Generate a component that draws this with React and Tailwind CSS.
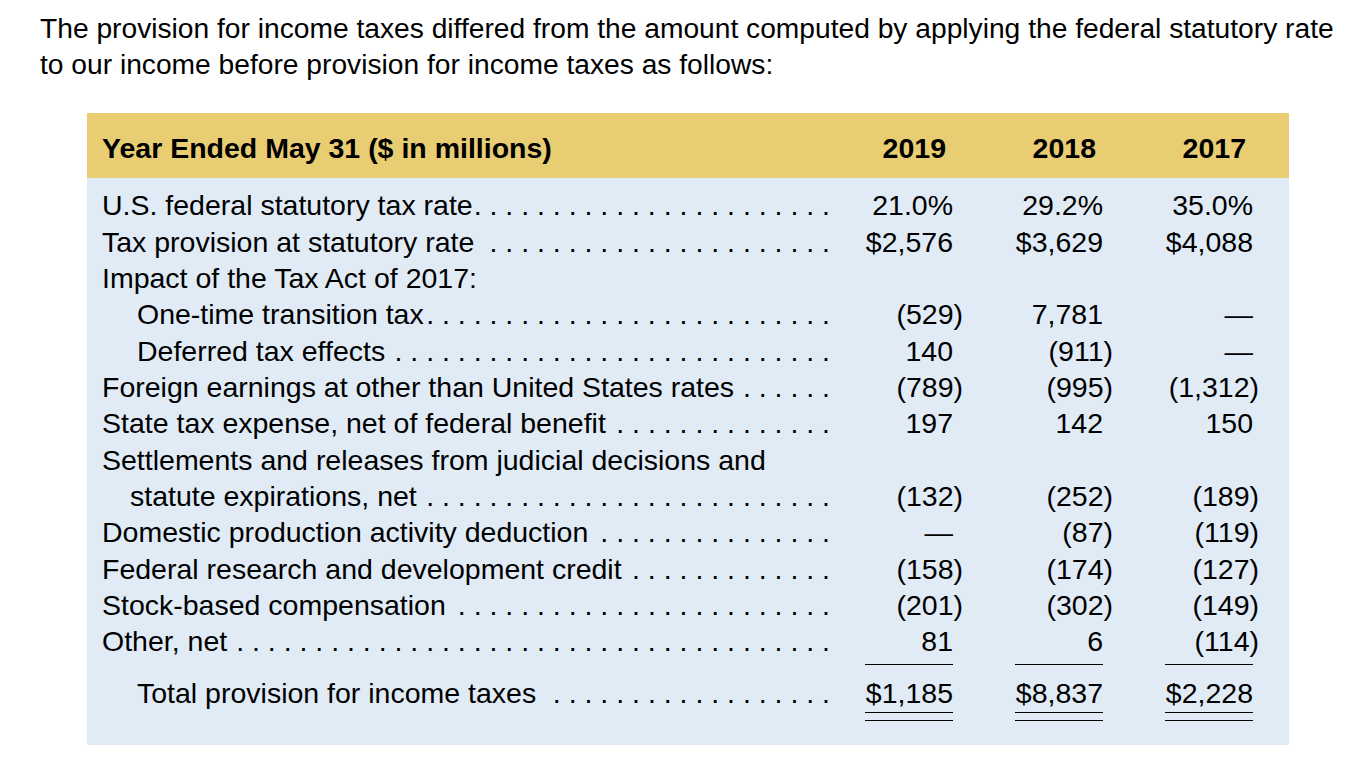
const cols = ["w-[123px]", "w-[150px]", "w-[150px]"];
const hang = ["mr-[-10px]", "mr-[-10px]", "mr-[-6px]"];

const rows = [
  { label: "U.S. federal statutory tax rate", vals: ["21.0%", "29.2%", "35.0%"] },
  { label: "Tax provision at statutory rate", vals: ["$2,576", "$3,629", "$4,088"] },
  { label: "Impact of the Tax Act of 2017:", noLeader: true },
  { label: "One-time transition tax", indent: 35, vals: ["(529)", "7,781", "—"] },
  { label: "Deferred tax effects", indent: 35, vals: ["140", "(911)", "—"] },
  { label: "Foreign earnings at other than United States rates", vals: ["(789)", "(995)", "(1,312)"] },
  { label: "State tax expense, net of federal benefit", vals: ["197", "142", "150"] },
  { label: "Settlements and releases from judicial decisions and", noLeader: true },
  { label: "statute expirations, net", indent: 28, vals: ["(132)", "(252)", "(189)"] },
  { label: "Domestic production activity deduction", vals: ["—", "(87)", "(119)"] },
  { label: "Federal research and development credit", vals: ["(158)", "(174)", "(127)"] },
  { label: "Stock-based compensation", vals: ["(201)", "(302)", "(149)"] },
  { label: "Other, net", vals: ["81", "6", "(114)"], rule: true },
];

const indents = { 0: "", 28: "pl-[28px]", 35: "pl-[35px]" };

// label column is 728px wide; leaders are whole dots on a 15.84px pitch, flush right
const LABEL_W = 728;
const HALF = 7.92;
let ctx;
const dotsFor = (text, indent, trim = 0) => {
  if (!ctx) {
    ctx = document.createElement("canvas").getContext("2d");
    ctx.font = "28.5px 'Liberation Sans'";
  }
  const free = LABEL_W - indent - ctx.measureText(text).width;
  const n = Math.max(0, Math.floor((free / HALF + 1) / 2) - trim);
  return n ? ". ".repeat(n - 1) + "." : "";
};

const Value = ({ v, i }) => {
  if (v.startsWith("(")) {
    return (
      <>
        {v.slice(0, -1)}
        <span className={hang[i]}>)</span>
      </>
    );
  }
  return v;
};

const Label = ({ text, indent = 0, noLeader, trim }) => (
  <div className={`flex flex-1 min-w-0 ${indents[indent]}`}>
    <span className="whitespace-nowrap shrink-0">{text}</span>
    {!noLeader && (
      <span className="flex-1 min-w-0 overflow-hidden whitespace-nowrap text-right">
        {dotsFor(text, indent, trim)}
      </span>
    )}
  </div>
);

export default function App() {
  return (
    <div className="min-h-[764px] bg-white text-black font-['Liberation_Sans',Arial,Helvetica,sans-serif]">
      <p className="pl-[40px] pt-[10px] w-[1340px] text-[28.2px] leading-[36px]">
        The provision for income taxes differed from the amount computed by applying the federal statutory rate
        to our income before provision for income taxes as follows:
      </p>

      <div className="ml-[87px] mt-[31px] w-[1202px] text-[28.5px] leading-[36.33px]">
        {/* header */}
        <div className="flex bg-[#e8cd72] pl-[15px] pr-[36px] pt-[17px] pb-[12px] font-bold">
          <div className="flex-1">Year Ended May 31 ($ in millions)</div>
          {["2019", "2018", "2017"].map((y, i) => (
            <div key={y} className={`${cols[i]} text-right pr-[7px]`}>
              {y}
            </div>
          ))}
        </div>

        {/* body */}
        <div className="bg-[#e1ebf6] pl-[15px] pr-[36px] pt-[9px] pb-[24px]">
          {rows.map((r) => (
            <div key={r.label} className="flex">
              <Label text={r.label} indent={r.indent} noLeader={r.noLeader} />
              {[0, 1, 2].map((i) => (
                <div key={i} className={`${cols[i]} shrink-0 flex justify-end`}>
                  <div
                    className={`w-[88px] text-right whitespace-nowrap ${
                      r.rule ? "pb-[4px] border-b-[1.5px] border-black" : ""
                    }`}
                  >
                    {r.vals ? <Value v={r.vals[i]} i={i} /> : "\u00a0"}
                  </div>
                </div>
              ))}
            </div>
          ))}

          {/* total */}
          <div className="flex mt-[10px]">
            <Label text="Total provision for income taxes" indent={35} trim={1} />
            {["$1,185", "$8,837", "$2,228"].map((v, i) => (
              <div key={v} className={`${cols[i]} shrink-0 flex justify-end`}>
                <div className="w-[88px] text-right">
                  <div>{v}</div>
                  <div className="mt-[1px] h-[9px] border-y-[1.5px] border-black" />
                </div>
              </div>
            ))}
          </div>
        </div>
      </div>
    </div>
  );
}
